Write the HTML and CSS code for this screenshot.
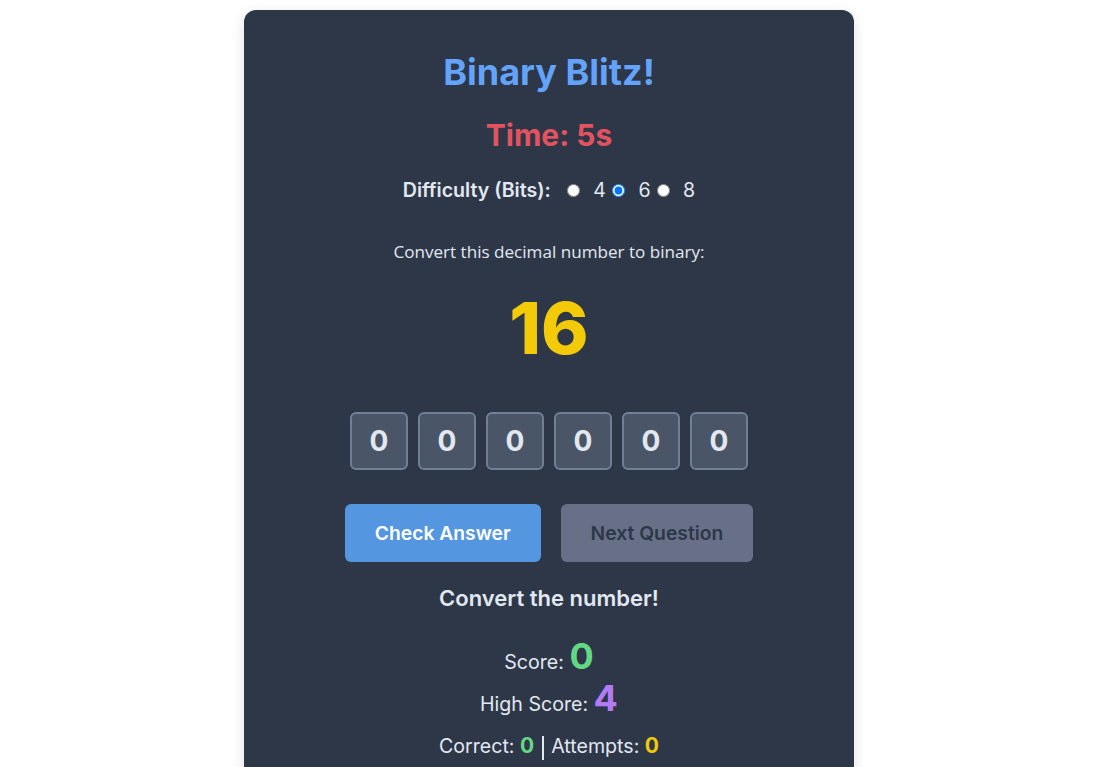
FILE: index.html
```html
<!DOCTYPE html>
<html lang="en">
<head>
<meta charset="utf-8">
<title>Binary Blitz!</title>
<link rel="stylesheet" href="styles.css">
</head>
<body>
<main class="game">
  <h1 class="title">Binary Blitz!</h1>
  <div class="timer">Time: 5s</div>

  <div class="difficulty">
    <span class="difficulty-label">Difficulty (Bits):</span>
    <label class="bit-option"><input type="radio" name="bits" value="4"> 4</label>
    <label class="bit-option"><input type="radio" name="bits" value="6" checked> 6</label>
    <label class="bit-option"><input type="radio" name="bits" value="8"> 8</label>
  </div>

  <p class="prompt">Convert this decimal number to binary:</p>
  <div class="target">16</div>

  <div class="bits">
    <button class="bit">0</button>
    <button class="bit">0</button>
    <button class="bit">0</button>
    <button class="bit">0</button>
    <button class="bit">0</button>
    <button class="bit">0</button>
  </div>

  <div class="actions">
    <button class="btn btn-check">Check Answer</button>
    <button class="btn btn-next" disabled>Next Question</button>
  </div>

  <div class="feedback">Convert the number!</div>

  <div class="stats">
    <div class="stat-line">Score: <span class="big score">0</span></div>
    <div class="stat-line">High Score: <span class="big high">4</span></div>
    <div class="stat-line">Correct: <span class="count correct">0</span> <span class="sep"></span> Attempts: <span class="count attempts">0</span></div>
  </div>
</main>
</body>
</html>
```

FILE: styles.css
```css
html, body {
  margin: 0;
  padding: 0;
  background: #ffffff;
}

body {
  font-family: Inter, "Liberation Sans", sans-serif;
  color: #e2e8f0;
  padding: 10px 2px 0 0;
}

.game {
  width: 610px;
  margin: 0 auto;
  box-sizing: border-box;
  background: #2d3748;
  border-radius: 12px;
  box-shadow: 0 4px 14px rgba(0, 0, 0, 0.12);
  padding: 42px 20px 40px;
  display: flex;
  flex-direction: column;
  align-items: center;
  min-height: 800px;
}

.title {
  margin: 0;
  font-size: 36px;
  line-height: 40px;
  font-weight: 700;
  color: #63a3fb;
}

.timer {
  margin-top: 25px;
  font-size: 30px;
  line-height: 36px;
  font-weight: 700;
  color: #e2535f;
}

.difficulty {
  margin-top: 23px;
  display: flex;
  align-items: center;
  font-size: 19.6px;
  line-height: 28px;
}

.difficulty-label {
  font-weight: 600;
  margin-right: 10px;
}

.bit-option {
  display: inline-flex;
  align-items: center;
  white-space: pre;
}

.bit-option input {
  margin: 0 8px 0 6px;
  width: 13px;
  height: 13px;
}

.prompt {
  margin: 36px 0 0;
  font-family: "Open Sans", "Noto Sans", sans-serif;
  font-size: 17.1px;
  line-height: 24px;
}

.target {
  margin-top: 28px;
  font-size: 72px;
  line-height: 72px;
  font-weight: 800;
  color: #f2ca08;
}

.bits {
  margin-top: 48px;
  display: flex;
  gap: 10px;
}

.bit {
  width: 58px;
  height: 58px;
  box-sizing: border-box;
  background: #4a5568;
  border: 2px solid #718096;
  border-radius: 6px;
  color: #e2e8f0;
  font-family: Inter, sans-serif;
  font-size: 28px;
  font-weight: 700;
  padding: 0;
}

.actions {
  margin-top: 34px;
  display: flex;
  gap: 20px;
}

.btn {
  height: 58px;
  padding: 0 30px;
  border: none;
  border-radius: 6px;
  font-family: Inter, sans-serif;
  font-size: 19.3px;
  font-weight: 600;
}

.btn-check {
  background: #5596e0;
  color: #ffffff;
}

.btn-next {
  background: #687088;
  color: #2d3748;
}

.feedback {
  margin-top: 22px;
  font-size: 22px;
  line-height: 28px;
  font-weight: 600;
}

.stats {
  margin-top: 29px;
  display: flex;
  flex-direction: column;
  align-items: center;
}

.stat-line {
  font-size: 19.6px;
  line-height: 42px;
}

.big {
  font-size: 36px;
  line-height: 0.8;
  font-weight: 700;
}

.score { color: #63d883; }
.high { color: #b27bf5; }

.count {
  font-weight: 700;
  font-size: 21px;
}

.correct { color: #63d883; }
.attempts { color: #f2ca08; }

.sep {
  display: inline-block;
  width: 2px;
  height: 24px;
  background: #e2e8f0;
  vertical-align: middle;
  margin: 0 2px;
}
```
